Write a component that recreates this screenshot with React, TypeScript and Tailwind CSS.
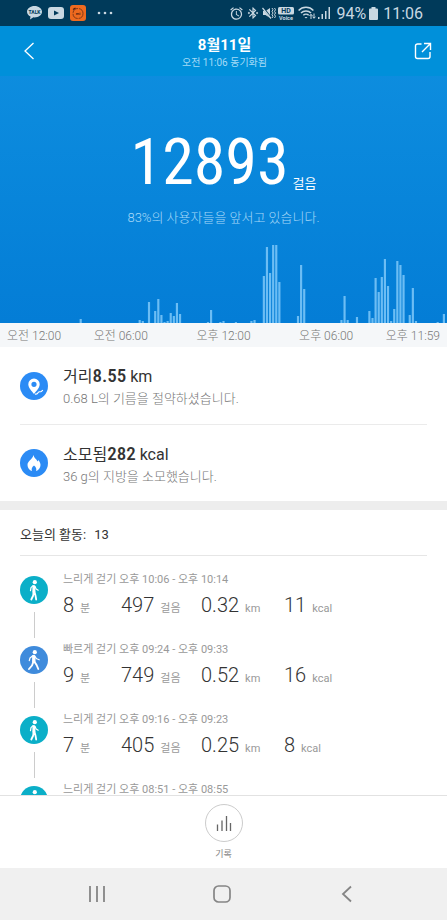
import { MdAlarm, MdBluetoothConnected } from "react-icons/md";

// steps per ten minutes: [slot of the day, bar height]
const steps = [
  [26, 4], [45, 3], [46, 2], [48, 21], [50, 12], [51, 24], [52, 8], [53, 1],
  [54, 2], [55, 10], [56, 7], [57, 20], [58, 9], [67, 1], [68, 13], [71, 1],
  [72, 2], [76, 1], [81, 2], [82, 3], [85, 47], [86, 76], [87, 50], [88, 78],
  [89, 78], [90, 41], [96, 7], [97, 58], [98, 34], [110, 3], [111, 27],
  [112, 3], [115, 6], [119, 12], [120, 5], [121, 45], [122, 31], [123, 46],
  [124, 64], [125, 37], [126, 2], [127, 14], [128, 62], [129, 58], [130, 48],
  [132, 8], [133, 35], [134, 2], [141, 1], [143, 9],
];

type Activity = {
  title: string;
  fast?: boolean;
  values?: [string, string][];
};

const activities: Activity[] = [
  { title: "느리게 걷기 오후 10:06 - 오후 10:14", values: [["8", "분"], ["497", "걸음"], ["0.32", "km"], ["11", "kcal"]] },
  { title: "빠르게 걷기 오후 09:24 - 오후 09:33", fast: true, values: [["9", "분"], ["749", "걸음"], ["0.52", "km"], ["16", "kcal"]] },
  { title: "느리게 걷기 오후 09:16 - 오후 09:23", values: [["7", "분"], ["405", "걸음"], ["0.25", "km"], ["8", "kcal"]] },
  { title: "느리게 걷기 오후 08:51 - 오후 08:55" },
];

const StatusBar = () => (
  <div className="flex h-[26px] shrink-0 items-center justify-between bg-[#003a5a] pr-6 pl-[27px] text-[#c9d8e2]">
    <div className="flex items-center gap-[6px]">
      <svg width="15" height="14" viewBox="0 0 15 14">
        <path fill="currentColor" d="M7.500 0C3.400 0 0 2.500 0 5.700c0 2 1.400 3.800 3.500 4.800L3 13.500l3.400-2.200 1.100.1c4.100 0 7.500-2.500 7.500-5.700S11.600 0 7.500 0z" />
        <text x="7.500" y="8" fontSize="5" fontWeight="700" textAnchor="middle" fill="#003a5a">TALK</text>
      </svg>
      <svg width="16" height="12" viewBox="0 0 16 12">
        <rect width="16" height="12" rx="3" fill="currentColor" />
        <path d="M6 3.500v5L11 6z" fill="#003a5a" />
      </svg>
      <svg width="16" height="16" viewBox="0 0 16 16">
        <rect width="16" height="16" rx="3" fill="#ee6a1f" />
        <circle cx="8" cy="8.500" r="5" fill="none" stroke="#6b2c14" strokeWidth=".8" strokeDasharray="7 1" />
        <path d="M3 4.500 5.500 3" stroke="#4a1d10" strokeWidth="1.200" />
        <text x="8" y="10" fontSize="4" fontWeight="700" textAnchor="middle" fill="#4a1d10">mi</text>
      </svg>
      <svg className="ml-[5px]" width="16" height="4" viewBox="0 0 16 4" fill="currentColor">
        <circle cx="2" cy="2" r="1.300" />
        <circle cx="8" cy="2" r="1.300" />
        <circle cx="14" cy="2" r="1.300" />
      </svg>
    </div>
    <div className="flex items-center gap-[2px]">
      <MdAlarm size={15} />
      <MdBluetoothConnected size={14} />
      <svg width="14" height="14" viewBox="0 0 14 14" fill="none" stroke="currentColor">
        <path d="M1 5h2.500L8 2v10L3.500 9H1z" fill="currentColor" stroke="none" />
        <path d="M1 1.500 9 12" stroke="#003a5a" strokeWidth="2" />
        <path d="M.5 2 9 12.500" strokeWidth="1.200" />
        <path d="M10 2l1 1.700-1 1.600 1 1.700-1 1.700 1 1.600-1 1.700M12.500 2l1 1.700-1 1.600 1 1.700-1 1.700 1 1.600-1 1.700" />
      </svg>
      <svg width="16" height="13" viewBox="0 0 16 13">
        <rect width="16" height="7.500" rx="1.500" fill="currentColor" />
        <text x="8" y="6.400" fontSize="7" fontWeight="700" textAnchor="middle" fill="#003a5a">HD</text>
        <text x="8" y="12.800" fontSize="5.500" fontWeight="700" textAnchor="middle" fill="currentColor">Voice</text>
      </svg>
      <svg className="ml-[2px]" width="18" height="14" viewBox="0 0 18 14" fill="none" stroke="currentColor" strokeWidth="1.500">
        <path d="M.6 4.500c4-4.300 10.800-4.300 14.800 0M3 7c2.700-2.800 7.300-2.800 10 0M5.300 9.300c1.500-1.500 3.900-1.500 5.400 0" />
        <path d="M8 12.500 6.500 11h3z" fill="currentColor" stroke="none" />
        <path d="M13 13V8.500M11.500 10 13 8.300l1.500 1.700M16 7.500V12M14.700 10.700 16 12.300l1.400-1.600" strokeWidth="1" />
      </svg>
      <svg width="12" height="12" viewBox="0 0 12 12" fill="currentColor">
        <path d="M0 10h1.500v2H0zM3.500 7H5v5H3.500zM7 4h1.500v8H7zM10.500 0H12v12h-1.500z" />
      </svg>
      <span className="ml-1 pt-[2px] text-base leading-5">94%</span>
      <svg className="mx-px" width="9" height="13" viewBox="0 0 9 13" fill="currentColor">
        <path d="M2.500 0h4v1.500H8a1 1 0 0 1 1 1V12a1 1 0 0 1-1 1H1a1 1 0 0 1-1-1V2.500a1 1 0 0 1 1-1h1.500z" />
      </svg>
      <span className="ml-[2px] pt-[2px] text-base leading-5">11:06</span>
    </div>
  </div>
);

const Walker = ({ fast }: { fast?: boolean }) => (
  <svg width="28" height="28" viewBox="0 0 28 28" fill="none" stroke="#fff" strokeLinecap="round" strokeLinejoin="round">
    <circle cx="14" cy="14" r="14" stroke="none" fill={fast ? "#3f8bdc" : "#0bafc8"} />
    <circle cx="14.800" cy="6.200" r="2.100" stroke="none" fill="#fff" />
    {fast ? (
      <>
        <path d="M13.800 10.500v5" strokeWidth="3.400" />
        <path d="M12.800 9.700 10 12l-.7 2.600M15 10.500l1.700 2.300 2.500 1" strokeWidth="1.200" />
        <path d="M13.300 16l-1.300 3.500-3 3.500M14.600 16l2 3 1.700 4" strokeWidth="1.900" />
      </>
    ) : (
      <>
        <path d="M13.900 10.500v5" strokeWidth="3" />
        <path d="M13 9.700l-2 2-.5 3M15 10.500l1.200 2.500 2 1.200" strokeWidth="1.200" />
        <path d="M13.500 16l-.3 3.500-1.900 4M14.500 16l1 3.500.7 4" strokeWidth="1.800" />
      </>
    )}
  </svg>
);

const Chart = () => (
  <svg className="block h-[78px] w-full" viewBox="0 0 144 78" preserveAspectRatio="none" fill="#6cbdf4">
    {steps.map(([slot, height]) => (
      <rect key={slot} x={slot - 0.35} y={78 - height} width={0.7} height={height} />
    ))}
  </svg>
);

const App = () => {
  return (
    <div className="flex h-screen flex-col bg-white font-['Roboto','Noto_Sans_CJK_KR',sans-serif] text-[#333]">
      <StatusBar />
      <div className="shrink-0 bg-linear-to-b from-[#0f90e0] to-[#047dd6] text-white">
        <header className="flex h-[50px] items-center justify-between bg-[#0090da] pr-[15px] pl-[23px]">
          <button aria-label="뒤로">
            <svg width="12" height="18" viewBox="0 0 12 18" fill="none" stroke="currentColor" strokeWidth="1.300">
              <path d="M10.500 1 2 9l8.500 8" />
            </svg>
          </button>
          <div className="pt-[3px] text-center">
            <h1 className="text-[15px] leading-5 font-bold">8월11일</h1>
            <p className="text-[10px] leading-4 text-[#a3daf6]">오전 11:06 동기화됨</p>
          </div>
          <button aria-label="공유">
            <svg width="18" height="18" viewBox="0 0 18 18" fill="none" stroke="currentColor" strokeWidth="1.400">
              <path d="M7.500 2H3.500A2 2 0 0 0 1.500 4v10.500a2 2 0 0 0 2 2H14a2 2 0 0 0 2-2V10M10 1.500h6.500V8M16.500 1.500 8 10" />
            </svg>
          </button>
        </header>
        <div className="flex items-end justify-center pt-[52px]">
          <span className="font-['Roboto_Condensed','Liberation_Sans_Narrow',sans-serif] text-[64px] leading-[70px]">12893</span>
          <span className="ml-1 pb-1 text-[13px] leading-5">걸음</span>
        </div>
        <p className="mt-[10px] text-center text-[13px] leading-5 font-light text-[#a6d8f8]">83%의 사용자들을 앞서고 있습니다.</p>
        <div className="pt-[17px]">
          <Chart />
        </div>
      </div>
      <div className="flex h-6 shrink-0 items-center justify-between bg-[#f5f7f9] px-[7px] pt-[2px] text-xs font-light text-[#777]">
        <span>오전 12:00</span>
        <span>오전 06:00</span>
        <span className="ml-4">오후 12:00</span>
        <span className="ml-4">오후 06:00</span>
        <span>오후 11:59</span>
      </div>

      <section className="shrink-0 px-5">
        <div className="flex h-[78px] items-center gap-[15px] border-b border-[#ebebeb]">
          <svg width="28" height="28" viewBox="0 0 28 28">
            <circle cx="14" cy="14" r="14" fill="#2b8bf5" />
            <path fill="#fff" fillRule="evenodd" d="M14 6.500a5.700 5.700 0 0 0-5.700 5.700c0 3.700 3.700 7 5.700 9.800 2-2.800 5.700-6.100 5.700-9.800A5.700 5.700 0 0 0 14 6.500zm0 3.200a2.600 2.600 0 1 1 0 5.200 2.600 2.600 0 0 1 0-5.200z" />
            <path fill="none" stroke="#fff" strokeWidth="1.100" d="M15 22c1.500.5 2.500 0 3.200-1.500.8-1.500 2-.3 3-.9.800-.5 1-1.100 1.800-1.300" />
          </svg>
          <div className="pt-[2px]">
            <p className="text-base leading-6">거리<b className="font-['Roboto_Condensed'] text-[19px] leading-6 font-medium">8.55</b> km</p>
            <p className="text-[13px] leading-5 font-light text-[#777]">0.68 L의 기름을 절약하셨습니다.</p>
          </div>
        </div>
        <div className="flex h-[76px] items-center gap-[15px]">
          <svg width="28" height="28" viewBox="0 0 28 28">
            <circle cx="14" cy="14" r="14" fill="#2b8bf5" />
            <path fill="#fff" d="M13.500 6c.4 3 3.100 4 4 6.500.5-.5.700-1 .8-1.600 1.400 1.600 2.200 3.300 2.200 5.100 0 3-1.900 5.200-4.500 6 .8-1.800.2-3.800-2-5.500-2.200 1.700-2.800 3.700-2 5.500-2.600-.8-4.500-3-4.500-6 0-4 4.700-5.200 6-10z" />
          </svg>
          <div className="pt-[2px]">
            <p className="text-base leading-6">소모됨<b className="font-['Roboto_Condensed'] text-[19px] leading-6 font-medium">282</b> kcal</p>
            <p className="text-[13px] leading-5 font-light text-[#777]">36 g의 지방을 소모했습니다.</p>
          </div>
        </div>
      </section>

      <section className="min-h-0 flex-1 overflow-hidden border-t-[9px] border-[#ededed] px-5">
        <h2 className="flex h-[46px] items-center gap-2 border-b border-[#e6e6e6] pt-[5px] text-[13px] font-normal">
          오늘의 활동: <span>13</span>
        </h2>
        <ul className="pt-[14px]">
          {activities.map((item) => (
            <li key={item.title} className="flex h-[70px] gap-[15px] last:h-9">
              <div className="flex w-7 shrink-0 flex-col items-center gap-2 pt-[6px]">
                <Walker fast={item.fast} />
                {item.values && <span className="h-[26px] w-px shrink-0 bg-[#ccc]" />}
              </div>
              <div>
                <p className="text-[11px] leading-5 text-[#999]">{item.title}</p>
                <div className="grid grid-cols-[58px_80px_83px_auto] pt-px text-[11px] text-[#999]">
                  {item.values?.map(([value, unit]) => (
                    <span key={unit} className="flex items-baseline gap-[6px]">
                      <b className="text-xl leading-7 font-light text-[#333]">{value}</b>
                      {unit}
                    </span>
                  ))}
                </div>
              </div>
            </li>
          ))}
        </ul>
      </section>

      <footer className="flex h-[73px] shrink-0 justify-center border-t border-[#e2e2e2] pt-2">
        <button className="flex flex-col items-center text-[9px] leading-4 text-[#888]">
          <span className="mb-1 flex size-[38px] items-center justify-center rounded-full border border-[#ccc]">
            <svg width="16" height="16" viewBox="0 0 16 16" stroke="#666" strokeWidth="1.300">
              <path d="M1.500 9.500V16M6 5.500V16M10.500 1v15M14.500 8v8" />
            </svg>
          </span>
          기록
        </button>
      </footer>

      <nav className="flex h-[52px] shrink-0 items-center justify-center gap-[107px] bg-[#f0f0f0] pr-1 text-[#858585]">
        <button aria-label="최근 앱">
          <svg width="18" height="18" viewBox="0 0 18 18" stroke="currentColor" strokeWidth="1.800">
            <path d="M2 1v16M9 1v16M16 1v16" />
          </svg>
        </button>
        <button aria-label="홈">
          <svg width="18" height="18" viewBox="0 0 18 18" fill="none" stroke="currentColor" strokeWidth="1.700">
            <rect x="1" y="1" width="16" height="16" rx="4.500" />
          </svg>
        </button>
        <button aria-label="이전">
          <svg width="18" height="18" viewBox="0 0 18 18" fill="none" stroke="currentColor" strokeWidth="1.800">
            <path d="M13 1.500 5 9l8 7.500" />
          </svg>
        </button>
      </nav>
    </div>
  );
};

export default App;
